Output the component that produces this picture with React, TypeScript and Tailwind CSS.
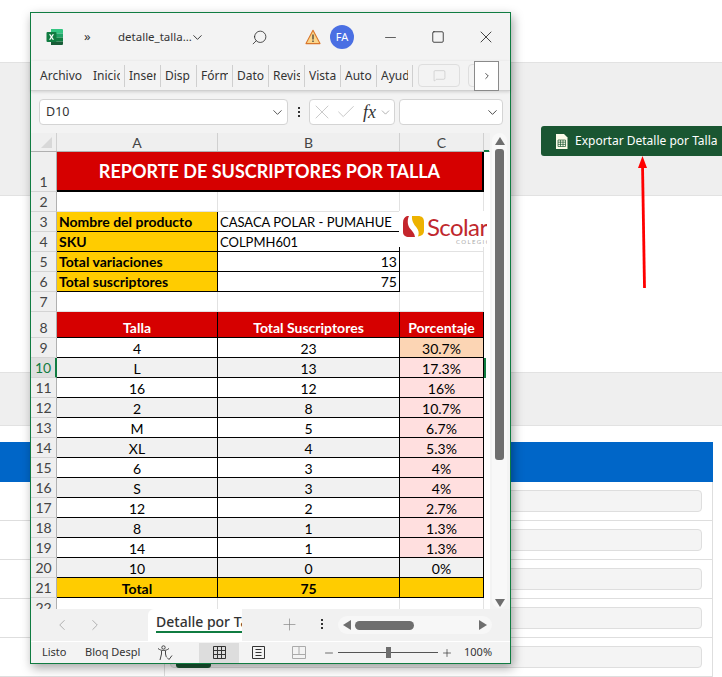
import { Check, ChevronDown, MessageSquare, Search, Square, X, Minus, Plus, ChevronLeft, ChevronRight } from "lucide-react";

const RIBBON_TABS = ["Inicio", "Insertar", "Disp", "Fórmulas", "Datos", "Revisar", "Vista", "Automatizar", "Ayuda"];

const SIZES = [
  { talla: "4", total: "23", pct: "30.7%", hot: true },
  { talla: "L", total: "13", pct: "17.3%" },
  { talla: "16", total: "12", pct: "16%" },
  { talla: "2", total: "8", pct: "10.7%" },
  { talla: "M", total: "5", pct: "6.7%" },
  { talla: "XL", total: "4", pct: "5.3%" },
  { talla: "6", total: "3", pct: "4%" },
  { talla: "S", total: "3", pct: "4%" },
  { talla: "12", total: "2", pct: "2.7%" },
  { talla: "8", total: "1", pct: "1.3%" },
  { talla: "14", total: "1", pct: "1.3%" },
  { talla: "10", total: "0", pct: "0%", empty: true },
];

function RowHead({ n, h = "h-5", active = false }: { n: number; h?: string; active?: boolean }) {
  return (
    <div
      className={`${h} w-[26px] shrink-0 flex items-end justify-center leading-[18px] font-normal text-[14px] border-b border-[#d4d4d4] border-r ${
        active ? "bg-[#dfdfdf] text-[#107c41] border-r-2 border-r-[#107c41]" : "bg-[#efefef] text-[#444] border-r-[#b0b0b0]"
      }`}
    >
      {n}
    </div>
  );
}

function InfoRow({ n, label, value, right }: { n: number; label: string; value: string; right?: boolean }) {
  return (
    <div className="flex h-5">
      <RowHead n={n} />
      <div className="w-[161px] bg-[#ffcc00] border-r border-b border-black pl-[2px] font-bold leading-[20px]">{label}</div>
      <div className={`w-[182px] bg-white border-r border-b border-black px-[2px] leading-[20px] whitespace-nowrap overflow-hidden ${right ? "text-right" : "text-[13px]"}`}>{value}</div>
      <div className="w-[84px] bg-white border-r border-b border-[#e2e2e2]" />
    </div>
  );
}

function BlankRow({ n, h = "h-5" }: { n: number; h?: string }) {
  return (
    <div className={`flex ${h} shrink-0`}>
      <RowHead n={n} h={h} />
      <div className="w-[161px] bg-white border-r border-b border-[#e2e2e2]" />
      <div className="w-[182px] bg-white border-r border-b border-[#e2e2e2]" />
      <div className="w-[84px] bg-white border-r border-b border-[#e2e2e2]" />
    </div>
  );
}

function ExcelIcon() {
  return (
    <svg width="18" height="18" viewBox="0 0 18 18">
      <path d="M5 1h11a1 1 0 0 1 1 1v3.5H5z" fill="#33c481" />
      <path d="M5 1v16h11a1 1 0 0 0 1-1v-2.5H5z" fill="#185c37" />
      <rect x="5" y="5.5" width="6" height="4" fill="#21a366" />
      <rect x="11" y="5.5" width="6" height="4" fill="#21a366" />
      <rect x="5" y="9.5" width="12" height="4" fill="#107c41" />
      <rect x="0.5" y="4" width="10" height="10" rx="1" fill="#107c41" />
      <path d="M3 6.2h1.5L5.5 8l1-1.8H8L6.3 9 8 11.8H6.5L5.5 10l-1 1.8H3L4.7 9z" fill="#fff" />
    </svg>
  );
}

function WarnIcon() {
  return (
    <svg width="16" height="16" viewBox="0 0 16 16">
      <path d="M8 1.2 15 14.6H1z" fill="#fbd58a" stroke="#d9762b" strokeWidth="1.1" strokeLinejoin="round" />
      <path d="M8 5.4v5M8 11.6v1.3" stroke="#333" strokeWidth="1.2" />
    </svg>
  );
}

export default function App() {
  return (
    <div className="relative w-[722px] h-[677px] overflow-hidden bg-white font-['Noto_Sans',sans-serif]">
      {/* page behind the spreadsheet */}
      <div className="h-[62px] bg-white" />
      <div className="h-[134px] bg-[#efefef] border-y border-[#e2e2e2] flex justify-end pt-[63px]">
        <button className="h-[30px] w-[181px] bg-[#1a5632] rounded-l-[3px] flex items-center pl-[14px] gap-[7px] text-white text-[12px] whitespace-nowrap">
          <svg width="13" height="15" viewBox="0 0 13 15" className="shrink-0">
            <path d="M1 0h8l3.5 3.500V15H1z" fill="#fbfbe9" />
            <path d="M3 6h7.500v6.500H3zM3 8.200h7.500M3 10.400h7.500M5.500 6v6.500M8 6v6.500" stroke="#1a5632" strokeWidth="0.7" fill="none" />
          </svg>
          Exportar Detalle por Talla
        </button>
      </div>
      <div className="h-[176px] bg-white" />
      <div className="h-[54px] bg-[#efefef] border-y border-[#e2e2e2]" />
      <div className="pt-4 w-[713px]">
        <div className="h-10 bg-[#0066c8]" />
        {[0, 1, 2, 3, 4].map((i) => (
          <div key={i} className="h-[39px] border-b border-r border-[#dedede] flex items-start pr-[10px]">
            <div className="w-[165px] h-[38px] border-r border-[#dedede] shrink-0" />
            <div className="relative mt-[8px] ml-[5px] grow h-[22px] bg-[#f4f4f4] border border-[#dedede] rounded-[4px]">
              {i === 4 && <div className="absolute left-[5px] top-[3px] w-[35px] h-[18px] bg-[#1a5632] rounded-b-[3px]" />}
            </div>
          </div>
        ))}
      </div>

      {/* arrow */}
      <svg className="absolute left-[630px] top-[150px]" width="30" height="145" viewBox="0 0 30 145">
        <path d="M14.500 138 12.500 14" stroke="#ff0000" strokeWidth="2.8" fill="none" />
        <path d="M12.500 6 17 18H8z" fill="#ff0000" />
      </svg>

      {/* excel window */}
      <div className="absolute left-[30px] top-[12px] w-[481px] h-[652px] border border-[#107c41] bg-[#f3f3f3] shadow-[2px_4px_10px_rgba(0,0,0,0.35)] flex flex-col text-[#222]">
        {/* title bar */}
        <div className="h-[48px] shrink-0 flex items-center text-[12px]">
          <div className="ml-[15px] w-[18px] flex"><ExcelIcon /></div>
          <div className="ml-[20px] w-[10px] text-[13px] leading-none text-[#333] -mt-[2px]">»</div>
          <div className="ml-[24px] w-[72px] whitespace-nowrap text-[11.5px] text-[#333]">detalle_talla...</div>
          <ChevronDown size={15} strokeWidth={1.4} />
          <Search size={17} strokeWidth={1.1} className="ml-[46px] -scale-x-100" />
          <div className="ml-[37px] flex"><WarnIcon /></div>
          <div className="ml-[9px] w-6 h-6 rounded-full bg-[#4a6fe3] text-white text-[11px] flex items-center justify-center">FA</div>
          <Minus size={17} strokeWidth={1} className="ml-[28px]" />
          <Square size={14} strokeWidth={1.4} className="ml-[32px]" />
          <X size={20} strokeWidth={1} className="ml-[31px]" />
        </div>
        {/* ribbon tabs */}
        <div className="h-[30px] shrink-0 flex items-center text-[12px] text-[#333] pl-[9px] border-b border-[#d0d0d0] shadow-[0_1px_3px_rgba(0,0,0,0.15)] relative">
          <div className="w-[53px]">Archivo</div>
          {RIBBON_TABS.map((t, i) => (
            <div key={t} className={`h-[22px] flex items-center border-r border-[#cfcfcf] ${i === 0 ? "w-[32px]" : "w-[36px] pl-[4px]"}`}>
              <div className="w-[27px] overflow-hidden whitespace-nowrap">{t}</div>
            </div>
          ))}
          <div className="ml-[5px] w-[42px] h-[23px] border border-[#dedede] rounded-[4px] flex items-center justify-center">
            <MessageSquare size={13} strokeWidth={1} className="text-[#bbb]" />
          </div>
          <div className="ml-[8px] w-[8px] h-[23px] border border-[#dedede] rounded-l-[4px]" />
          <div className="-ml-[2px] w-[25px] h-[30px] bg-white border border-[#8a8a8a] flex items-center justify-center">
            <ChevronRight size={10} strokeWidth={2} />
          </div>
        </div>
        {/* formula bar */}
        <div className="h-[42px] shrink-0 flex items-center pl-[8px]">
          <div className="w-[249px] h-[26px] bg-white border border-[#d4d4d4] rounded-[4px] flex items-center justify-between pl-[6px] pr-[2px] text-[12.5px] text-[#333]">
            D10
            <ChevronDown size={15} strokeWidth={1.3} />
          </div>
          <div className="w-[21px] flex flex-col items-center gap-[2px]">
            <span className="w-[2px] h-[2px] bg-[#333]" />
            <span className="w-[2px] h-[2px] bg-[#333]" />
            <span className="w-[2px] h-[2px] bg-[#333]" />
          </div>
          <div className="w-[86px] h-[26px] bg-white border border-[#d4d4d4] rounded-[4px] flex items-center overflow-hidden">
            <X size={24} strokeWidth={0.8} className="text-[#bdbdbd] shrink-0" />
            <Check size={22} strokeWidth={0.9} className="text-[#bdbdbd] ml-[1px] shrink-0" />
            <span className="ml-[6px] font-['Liberation_Serif',serif] italic text-[18px] leading-none text-[#333]">fx</span>
            <ChevronDown size={13} strokeWidth={1.2} className="text-[#888] ml-[3px] shrink-0" />
          </div>
          <div className="ml-[4px] w-[104px] h-[26px] bg-white border border-[#d4d4d4] rounded-[4px] flex items-center justify-end pr-[2px]">
            <ChevronDown size={15} strokeWidth={1.3} />
          </div>
        </div>

        {/* sheet */}
        <div className="h-[476px] shrink-0 flex overflow-hidden">
          <div className="w-[459px] shrink-0 relative overflow-hidden bg-white font-['Lato',sans-serif] text-[14px] text-black">
            <div className="flex h-[19px] bg-[#efefef] text-[#444] border-b border-[#b0b0b0]">
              <div className="w-[26px] border-r border-[#d0d0d0] flex items-end justify-end pr-[4px] pb-[3px]">
                <div className="w-0 h-0 border-l-[11px] border-l-transparent border-b-[11px] border-b-[#d8d8d8]" />
              </div>
              <div className="w-[161px] border-r border-[#d0d0d0] text-center leading-[20px]">A</div>
              <div className="w-[182px] border-r border-[#d0d0d0] text-center leading-[20px]">B</div>
              <div className="w-[84px] border-r border-[#d0d0d0] text-center leading-[20px]">C</div>
              <div className="grow relative"><div className="absolute left-0 -bottom-[1px] w-[5px] h-[2px] bg-[#107c41]" /></div>
            </div>

            <div className="flex h-10">
              <RowHead n={1} h="h-10" />
              <div className="w-[427px] bg-[#d60000] border-r-2 border-b-2 border-black flex items-center justify-center text-white font-bold text-[18px] pt-[1px]">
                REPORTE DE SUSCRIPTORES POR TALLA
              </div>
            </div>
            <BlankRow n={2} />
            <InfoRow n={3} label="Nombre del producto" value="CASACA POLAR - PUMAHUE" />
            <InfoRow n={4} label="SKU" value="COLPMH601" />
            <InfoRow n={5} label="Total variaciones" value="13" right />
            <InfoRow n={6} label="Total suscriptores" value="75" right />
            <BlankRow n={7} />

            <div className="flex h-[26px] text-white font-bold">
              <RowHead n={8} h="h-[26px]" />
              <div className="w-[161px] bg-[#d60000] border-r border-b border-black flex items-end justify-center leading-[18px]">Talla</div>
              <div className="w-[182px] bg-[#d60000] border-r border-b border-black flex items-end justify-center leading-[18px]">Total Suscriptores</div>
              <div className="w-[84px] bg-[#d60000] border-r border-b border-black flex items-end justify-center leading-[18px]">Porcentaje</div>
            </div>

            {SIZES.map((s, i) => {
              const zebra = i % 2 === 1 ? "bg-[#f1f1f1]" : "bg-white";
              const pctBg = s.hot ? "bg-[#fcd5b4]" : s.empty ? "bg-[#f1f1f1]" : "bg-[#ffdfdf]";
              return (
                <div key={s.talla} className="flex h-5 text-center leading-[21px]">
                  <RowHead n={i + 9} active={i === 1} />
                  <div className={`w-[161px] border-r border-b border-black ${zebra}`}>{s.talla}</div>
                  <div className={`w-[182px] border-r border-b border-black ${zebra}`}>{s.total}</div>
                  <div className={`w-[84px] border-r border-b border-black ${pctBg}`}>{s.pct}</div>
                  {i === 1 && <div className="w-[2px] h-5 bg-[#107c41]" />}
                </div>
              );
            })}

            <div className="flex h-5 text-center font-bold leading-[21px] bg-white">
              <RowHead n={21} />
              <div className="w-[161px] bg-[#ffcc00] border-r border-b border-black">Total</div>
              <div className="w-[182px] bg-[#ffcc00] border-r border-b border-black">75</div>
              <div className="w-[84px] bg-[#ffcc00] border-r border-b border-black" />
            </div>
            <BlankRow n={22} />

            {/* logo pasted on the sheet */}
            <div className="absolute left-[368px] top-[78px] w-[88px] h-[36px] bg-white overflow-hidden text-[#c0272d]">
              <svg className="absolute left-[4px] top-[5px]" width="21" height="21" viewBox="0 0 21 21">
                <path d="M4 0C1.500 1 0 3 0 7v9c0 3.500 2.500 5 6 5h6c-.5-4-3-6-5-8.500C4.500 9.500 4 4 6 0z" fill="#c4252c" />
                <path d="M9 0h6c4 0 6 2 6 6v9c0 3-2 5-6 5.500 1.500-3.500.5-6.500-1.500-9C11 8.500 8.500 5 9 0z" fill="#edb200" />
              </svg>
              <span className="absolute left-[28px] top-[1px] text-[24px] leading-[30px] tracking-[-0.6px] whitespace-nowrap">Scolar</span>
              <span className="absolute left-[57px] top-[27px] text-[6px] leading-[8px] tracking-[1.4px] text-[#aaa] whitespace-nowrap">COLEGIOS</span>
            </div>
          </div>

          {/* vertical scrollbar */}
          <div className="w-[20px] shrink-0 pl-[2px]">
            <div className="w-[15px] h-[475px] bg-[#f8f8f8] rounded-full flex flex-col items-center pt-[4px]">
              <svg width="10" height="8" viewBox="0 0 10 8"><path d="M5 0l5 8H0z" fill="#6e6e6e" /></svg>
              <div className="mt-[4px] w-[9px] h-[311px] bg-[#6e6e6e] rounded-[3px] shrink-0" />
              <svg className="mt-[139px]" width="10" height="8" viewBox="0 0 10 8"><path d="M5 8 10 0H0z" fill="#6e6e6e" /></svg>
            </div>
          </div>
        </div>

        {/* sheet tabs */}
        <div className="h-[32px] shrink-0 flex items-start bg-[#f1f1f1]">
          <ChevronLeft size={18} strokeWidth={1} className="ml-[22px] mt-[7px] text-[#999]" />
          <ChevronRight size={18} strokeWidth={1} className="ml-[15px] mt-[7px] text-[#999]" />
          <div className="ml-[44px] w-[94px] h-[32px] bg-white rounded-tl-[6px] pl-[8px] overflow-hidden whitespace-nowrap text-[14px] font-medium text-[#333]">
            <div className="leading-[25px] h-[22px]">Detalle por Talla</div>
            <div className="h-[2px] bg-[#107c41]" />
          </div>
          <Plus size={19} strokeWidth={0.9} className="ml-[38px] mt-[6px] text-[#888]" />
          <div className="ml-[22px] mt-[10px] flex flex-col gap-[2px]">
            <span className="w-[2px] h-[2px] bg-[#333]" />
            <span className="w-[2px] h-[2px] bg-[#333]" />
            <span className="w-[2px] h-[2px] bg-[#333]" />
          </div>
          <div className="ml-[15px] mt-[7px] w-[154px] h-[18px] bg-[#f7f7f7] rounded-full flex items-center pl-[5px]">
            <svg width="8" height="10" viewBox="0 0 8 10"><path d="M0 5l8-5v10z" fill="#6e6e6e" /></svg>
            <div className="ml-[4px] w-[59px] h-[9px] bg-[#6e6e6e] rounded-full" />
            <svg className="ml-[65px]" width="8" height="10" viewBox="0 0 8 10"><path d="M8 5 0 0v10z" fill="#6e6e6e" /></svg>
          </div>
        </div>

        {/* status bar */}
        <div className="h-[22px] shrink-0 flex items-center border-t border-white text-[11px] text-[#333] bg-[#f3f3f3]">
          <div className="ml-[11px] w-[43px]">Listo</div>
          <div className="w-[72px] whitespace-nowrap">Bloq Despl</div>
          <svg width="16" height="16" viewBox="0 0 16 16" fill="none" stroke="#333" strokeWidth="0.9">
            <circle cx="6.500" cy="2.500" r="1.700" />
            <path d="M1 3.500c2 1.500 3.500 2 5.500 2s3.500-.5 5.500-2M4.500 6v3L3 15M8.500 6v3l.8 3M10 12.500l2 2 3-4" />
          </svg>
          <div className="ml-[26px] w-[40px] h-[20px] bg-[#dddddd] flex items-center justify-center">
            <svg width="13" height="13" viewBox="0 0 13 13" fill="none" stroke="#333" strokeWidth="1">
              <path d="M.5.500h12v12H.5zM.5 4.500h12M.5 8.500h12M4.500.5v12M8.500.5v12" />
            </svg>
          </div>
          <svg className="ml-[13px]" width="13" height="13" viewBox="0 0 13 13" fill="none" stroke="#333" strokeWidth="1">
            <path d="M.5.500h12v12H.5zM3.500 3.500h6M3.500 6.500h6M3.500 9.500h6" />
          </svg>
          <svg className="ml-[27px]" width="14" height="13" viewBox="0 0 14 13" fill="none" stroke="#aaa" strokeWidth="1">
            <path d="M.5.500h13v12H.5zM.5 8.500h13M7 .5v8" />
          </svg>
          <Minus size={12} strokeWidth={1.4} className="ml-[17px]" />
          <div className="ml-[3px] w-[100px] h-px bg-[#555] flex items-center pl-[48px]">
            <div className="w-[5px] h-[11px] bg-[#6e6e6e] shrink-0" />
          </div>
          <Plus size={12} strokeWidth={1.4} className="ml-[3px]" />
          <div className="ml-[11px]">100%</div>
        </div>
      </div>
    </div>
  );
}
